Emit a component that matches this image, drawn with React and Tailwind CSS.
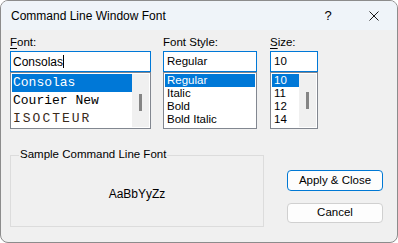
import React from 'react'

const ui = { fontFamily: '"Liberation Sans", Arial, sans-serif' }
const mono = { fontFamily: '"Liberation Mono", "Courier New", monospace' }

function Scrollbar({ top }) {
  return (
    <div className="w-[17px] shrink-0 bg-[#f0f0f0] relative">
      <div className={`absolute left-[7px] w-[3px] h-[17px] bg-[#858585] ${top}`} />
    </div>
  )
}

export default function App() {
  const fonts = [
    { name: 'Consolas', cls: '' },
    { name: 'Courier New', cls: '' },
    { name: 'ISOCTEUR', cls: 'tracking-[2px] text-[#3a2a1a]' },
  ]
  const styles = ['Regular', 'Italic', 'Bold', 'Bold Italic']
  const sizes = ['10', '11', '12', '14']

  return (
    <div className="w-[398px] h-[243px] bg-white text-black" style={ui}>
      <div className="w-full h-full border border-[#8c8c8c] rounded-[8px] overflow-hidden flex flex-col bg-[#f0f0f0]">
        {/* Title bar */}
        <div className="h-[29px] shrink-0 bg-[#eff4f9] flex items-center pl-[10px] text-[12px]">
          <span className="flex-1">Command Line Window Font</span>
          <span className="w-[10px] text-center text-[13px] mr-[36px]">?</span>
          <svg width="10" height="10" viewBox="0 0 10 10" className="mr-[18px]">
            <path d="M0.5 0.5 L9.5 9.5 M9.5 0.5 L0.5 9.5" stroke="#1a1a1a" strokeWidth="1" />
          </svg>
        </div>

        {/* Body */}
        <div className="flex-1 pl-[9px] pt-[5px] text-[11.5px]">
          <div className="flex">
            {/* Font */}
            <div className="w-[141px]">
              <div className="h-[16px] leading-[14px]">
                <span className="underline underline-offset-2">F</span>ont:
              </div>
              <div className="h-[21px] bg-white border border-[#0078d7] flex items-center pl-[2px] text-[12px]">
                Consolas<span className="w-px h-[13px] bg-black" />
              </div>
              <div className="h-[57px] bg-white border border-[#828790] p-px flex overflow-hidden">
                <div className="flex-1 text-[13px]" style={mono}>
                  {fonts.map((f, i) => (
                    <div
                      key={f.name}
                      className={`h-[18px] leading-[18px] pl-px whitespace-nowrap ${i === 0 ? 'bg-[#0078d7] text-white' : f.cls}`}
                    >
                      {f.name}
                    </div>
                  ))}
                </div>
                <Scrollbar top="top-[20px]" />
              </div>
            </div>

            {/* Font Style */}
            <div className="w-[94px] ml-[12px]">
              <div className="h-[16px] leading-[14px]">Font Style:</div>
              <div className="h-[21px] bg-white border border-[#0078d7] flex items-center pl-[3px]">Regular</div>
              <div className="h-[57px] bg-white border border-[#828790] p-px overflow-hidden">
                {styles.map((s, i) => (
                  <div key={s} className={`h-[13px] leading-[13px] pl-[2px] ${i === 0 ? 'bg-[#0078d7] text-white' : ''}`}>
                    {s}
                  </div>
                ))}
              </div>
            </div>

            {/* Size */}
            <div className="w-[48px] ml-[13px]">
              <div className="h-[16px] leading-[14px]">
                <span className="underline underline-offset-2">S</span>ize:
              </div>
              <div className="h-[21px] bg-white border border-[#0078d7] flex items-center pl-[3px]">10</div>
              <div className="h-[57px] bg-white border border-[#828790] p-px flex overflow-hidden">
                <div className="flex-1">
                  {sizes.map((s, i) => (
                    <div key={s} className={`h-[13px] leading-[13px] pl-[2px] ${i === 0 ? 'bg-[#0078d7] text-white' : ''}`}>
                      {s}
                    </div>
                  ))}
                </div>
                <Scrollbar top="top-[18px]" />
              </div>
            </div>
          </div>

          {/* Bottom section */}
          <div className="flex mt-[26px]">
            <div className="w-[254px] h-[72px] border border-[#dcdcdc] relative">
              <span className="absolute -top-[9px] left-[8px] px-px bg-[#f0f0f0] text-[11.5px] leading-[14px]">
                Sample Command Line Font
              </span>
              <div className="pt-[31px] text-center text-[12px] leading-[14px]">AaBbYyZz</div>
            </div>
            <div className="ml-[23px] mt-[15px] flex flex-col gap-[12px] text-[11.5px]">
              <button className="w-[96px] h-[21px] bg-[#fdfdfd] border border-[#0078d4] rounded-[4px]">
                Apply &amp; Close
              </button>
              <button className="w-[96px] h-[20px] bg-[#fdfdfd] border border-[#d0d0d0] rounded-[4px]">
                Cancel
              </button>
            </div>
          </div>
        </div>
      </div>
    </div>
  )
}
